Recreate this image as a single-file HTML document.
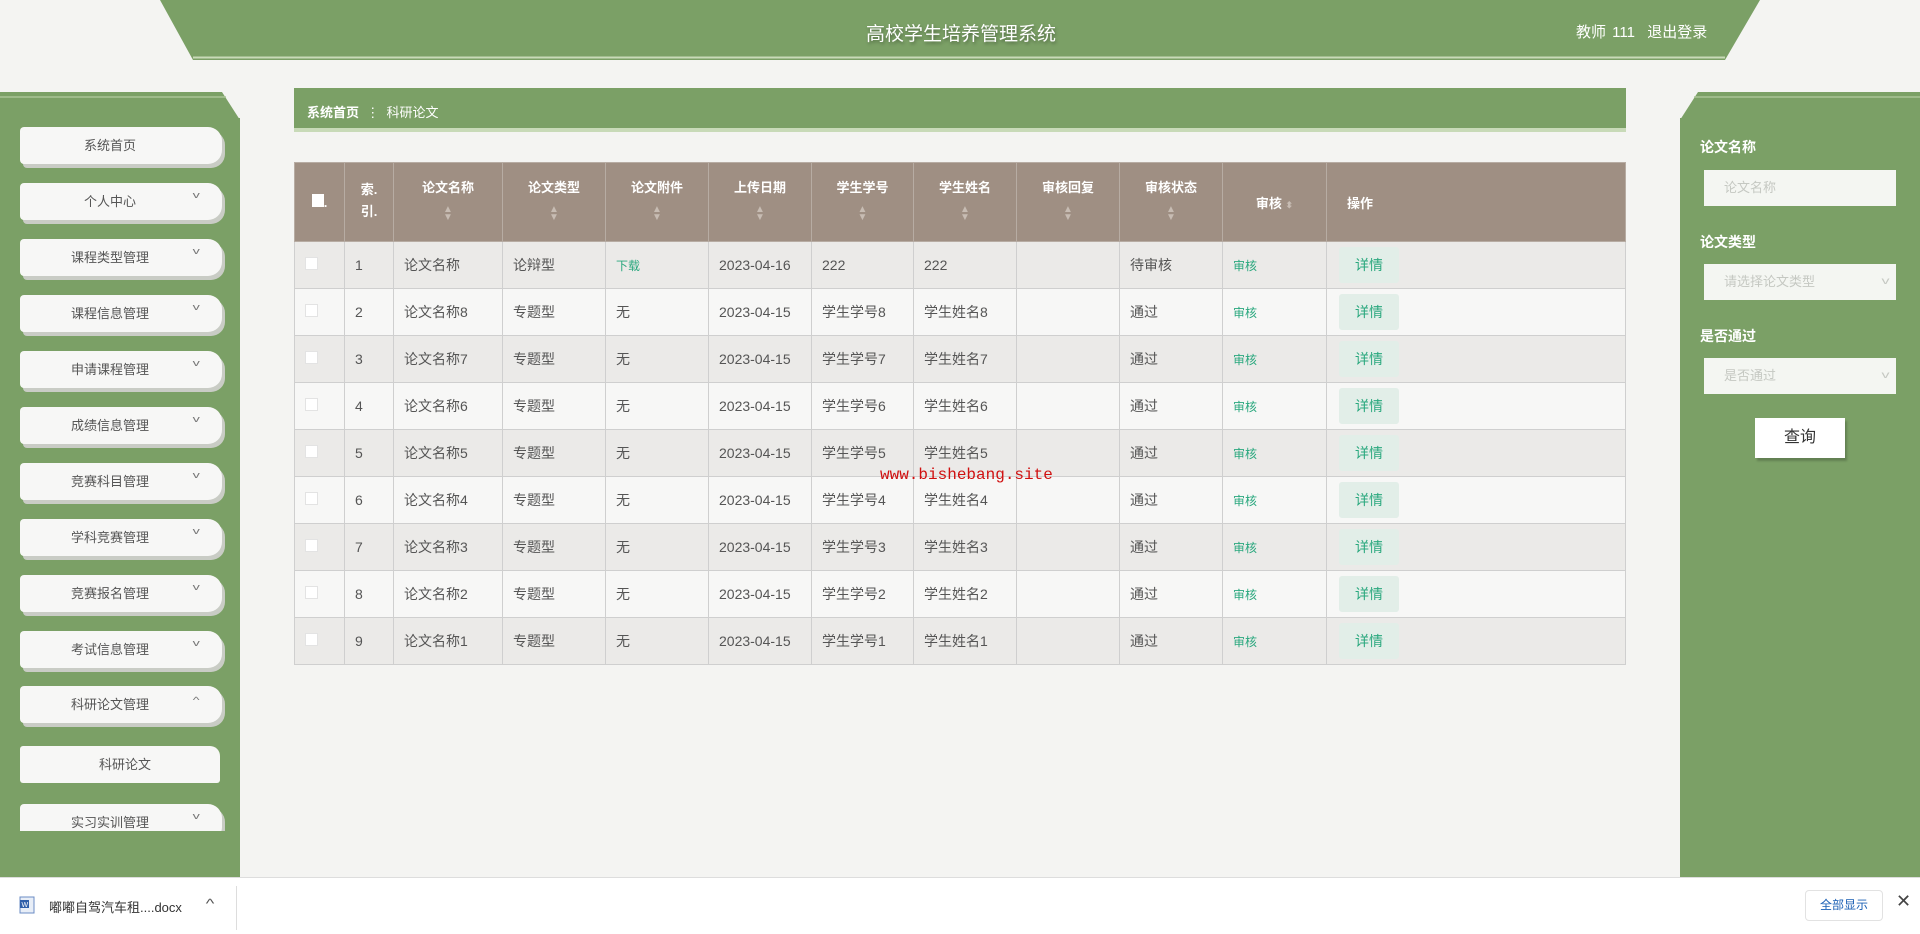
<!DOCTYPE html>
<html><head><meta charset="utf-8"><style>
*{margin:0;padding:0;box-sizing:border-box}
body{width:1920px;height:934px;overflow:hidden;background:#f4f4f2;font-family:"Liberation Sans","Noto Sans CJK SC",sans-serif;position:relative;color:#555}
.abs{position:absolute}
.title{left:0;width:1920px;top:19px;text-align:center;color:#fff;font-size:19px;text-shadow:1px 2px 3px rgba(0,0,0,.35);padding-left:2px}
.user{left:1576px;top:21px;color:#fff;font-size:15px;word-spacing:2px}
.side{left:0;width:240px;background:#7ba066}
.mi{position:absolute;left:20px;width:202px;height:37px;background:#f7f7f6;border-radius:4px 14px 14px 4px;box-shadow:3px 4px 0 #c9ccc5;font-size:13px;color:#555;text-align:center;line-height:37px;padding-right:22px}
.mi .ar{position:absolute;right:24px;top:-6px;font-size:9px;color:#777;transform:scaleX(1.6)}
.bc{left:294px;top:88px;width:1332px;height:44px;background:#7ba066;border-bottom:4px solid #c8dab8}
.bc span{position:absolute;left:13px;top:14px;color:#fff;font-size:13px}
table{position:absolute;left:294px;top:162px;width:1332px;border-collapse:collapse;font-size:14px}
th{background:#9f8f83;color:#fff;font-size:13px;font-weight:bold;height:79px;border:1px solid #b7aca3;vertical-align:top;padding-top:14px;text-align:center}
th .s{display:block;margin-top:10px;color:#c7bcb3;font-size:10px;line-height:8px}
td{height:47px;border:1px solid #cfcfcf;padding-left:10px;color:#555}
tr:nth-child(odd) td{background:#f7f7f6}
tr:nth-child(even) td{background:#ebeae8}
.g{color:#2aa87e;font-size:12px}
.cb{display:inline-block;width:13px;height:13px;background:#fff;border:1px solid #e3e3e3}
.dt{display:inline-block;width:60px;height:36px;line-height:36px;text-align:center;background:#e2eee8;color:#2aa87e;border-radius:3px;margin-left:2px}
.rp{left:1680px;width:240px;background:#7ba066}
.lb{position:absolute;left:20px;color:#fff;font-size:14px;font-weight:bold}
.in{position:absolute;left:24px;width:192px;height:36px;background:#f4f6f2;color:#c5c8c2;font-size:13px;line-height:36px;padding-left:20px}
.in i{position:absolute;right:8px;top:0;font-style:normal;font-size:10px;transform:scaleX(1.6)}
.btn{position:absolute;left:75px;width:90px;height:40px;background:#fff;text-align:center;line-height:40px;color:#333;font-size:16px;box-shadow:2px 3px 2px rgba(0,0,0,.2)}
.wm{left:880px;top:466px;color:#d01010;font-family:"Liberation Mono",monospace;font-size:16px}
.dl{left:0;top:877px;width:1920px;height:57px;background:#fff;border-top:1px solid #ddd}
</style></head><body>
<svg class="abs" style="left:0;top:0" width="1920" height="140">
<polygon points="160,0 1760,0 1725,60 193,60" fill="#7ba066"/>
<line x1="193" y1="57.5" x2="1725" y2="57.5" stroke="#c8dab8" stroke-width="2"/>
<polygon points="0,92 222,92 240,120 0,120" fill="#7ba066"/>
<line x1="0" y1="97" x2="226" y2="97" stroke="#a9c496" stroke-width="1.5"/>
<polygon points="1698,92 1920,92 1920,120 1680,140 1680,120" fill="#7ba066"/>
<line x1="1694" y1="97" x2="1920" y2="97" stroke="#a9c496" stroke-width="1.5"/>
</svg>
<div class="abs title">高校学生培养管理系统</div>
<div class="abs user">教师 111 &nbsp;退出登录</div>
<div class="abs side" style="top:118px;height:759px;overflow:hidden">
<div style="position:absolute;left:0;top:-18px;width:240px;height:731px;overflow:hidden">
<div class="mi" style="top:27px">系统首页</div>
<div class="mi" style="top:83px">个人中心<span class="ar">v</span></div>
<div class="mi" style="top:139px">课程类型管理<span class="ar">v</span></div>
<div class="mi" style="top:195px">课程信息管理<span class="ar">v</span></div>
<div class="mi" style="top:251px">申请课程管理<span class="ar">v</span></div>
<div class="mi" style="top:307px">成绩信息管理<span class="ar">v</span></div>
<div class="mi" style="top:363px">竞赛科目管理<span class="ar">v</span></div>
<div class="mi" style="top:419px">学科竞赛管理<span class="ar">v</span></div>
<div class="mi" style="top:475px">竞赛报名管理<span class="ar">v</span></div>
<div class="mi" style="top:531px">考试信息管理<span class="ar">v</span></div>
<div class="mi" style="top:586px">科研论文管理<span class="ar" style="top:-4px">^</span></div>
<div class="mi" style="top:646px;width:200px;box-shadow:none;padding-right:0;padding-left:10px;border-radius:3px 10px 3px 3px">科研论文</div>
<div class="mi" style="top:704px">实习实训管理<span class="ar">v</span></div>
</div></div>
<div class="abs bc"><span><b>系统首页</b> &nbsp;⋮ &nbsp;科研论文</span></div>
<table>
<colgroup><col style="width:50px"><col style="width:49px"><col style="width:109px"><col style="width:103px"><col style="width:103px"><col style="width:103px"><col style="width:102px"><col style="width:103px"><col style="width:103px"><col style="width:103px"><col style="width:104px"><col></colgroup>
<tr><th style="vertical-align:middle;padding-top:0"><span style="display:inline-block;width:12px;height:13px;background:#fff"></span>.</th><th style="line-height:22px;padding-top:16px">索.<br>引.</th><th>论文名称<span class="s">▲<br>▼</span></th><th>论文类型<span class="s">▲<br>▼</span></th><th>论文附件<span class="s">▲<br>▼</span></th><th>上传日期<span class="s">▲<br>▼</span></th><th>学生学号<span class="s">▲<br>▼</span></th><th>学生姓名<span class="s">▲<br>▼</span></th><th>审核回复<span class="s">▲<br>▼</span></th><th>审核状态<span class="s">▲<br>▼</span></th><th style="vertical-align:middle;padding-top:0">审核 <span style="color:#c7bcb3;font-size:9px">⬍</span></th><th style="vertical-align:middle;padding-top:0;text-align:left;padding-left:20px">操作</th></tr>
<tr><td><span class="cb"></span></td><td>1</td><td>论文名称</td><td>论辩型</td><td class="g">下载</td><td>2023-04-16</td><td>222</td><td>222</td><td></td><td>待审核</td><td class="g">审核</td><td><span class="dt">详情</span></td></tr>
<tr><td><span class="cb"></span></td><td>2</td><td>论文名称8</td><td>专题型</td><td>无</td><td>2023-04-15</td><td>学生学号8</td><td>学生姓名8</td><td></td><td>通过</td><td class="g">审核</td><td><span class="dt">详情</span></td></tr>
<tr><td><span class="cb"></span></td><td>3</td><td>论文名称7</td><td>专题型</td><td>无</td><td>2023-04-15</td><td>学生学号7</td><td>学生姓名7</td><td></td><td>通过</td><td class="g">审核</td><td><span class="dt">详情</span></td></tr>
<tr><td><span class="cb"></span></td><td>4</td><td>论文名称6</td><td>专题型</td><td>无</td><td>2023-04-15</td><td>学生学号6</td><td>学生姓名6</td><td></td><td>通过</td><td class="g">审核</td><td><span class="dt">详情</span></td></tr>
<tr><td><span class="cb"></span></td><td>5</td><td>论文名称5</td><td>专题型</td><td>无</td><td>2023-04-15</td><td>学生学号5</td><td>学生姓名5</td><td></td><td>通过</td><td class="g">审核</td><td><span class="dt">详情</span></td></tr>
<tr><td><span class="cb"></span></td><td>6</td><td>论文名称4</td><td>专题型</td><td>无</td><td>2023-04-15</td><td>学生学号4</td><td>学生姓名4</td><td></td><td>通过</td><td class="g">审核</td><td><span class="dt">详情</span></td></tr>
<tr><td><span class="cb"></span></td><td>7</td><td>论文名称3</td><td>专题型</td><td>无</td><td>2023-04-15</td><td>学生学号3</td><td>学生姓名3</td><td></td><td>通过</td><td class="g">审核</td><td><span class="dt">详情</span></td></tr>
<tr><td><span class="cb"></span></td><td>8</td><td>论文名称2</td><td>专题型</td><td>无</td><td>2023-04-15</td><td>学生学号2</td><td>学生姓名2</td><td></td><td>通过</td><td class="g">审核</td><td><span class="dt">详情</span></td></tr>
<tr><td><span class="cb"></span></td><td>9</td><td>论文名称1</td><td>专题型</td><td>无</td><td>2023-04-15</td><td>学生学号1</td><td>学生姓名1</td><td></td><td>通过</td><td class="g">审核</td><td><span class="dt">详情</span></td></tr>
</table>
<div class="abs rp" style="top:118px;height:759px">
<div class="lb" style="top:19px">论文名称</div>
<div class="in" style="top:52px">论文名称</div>
<div class="lb" style="top:114px">论文类型</div>
<div class="in" style="top:146px">请选择论文类型<i>v</i></div>
<div class="lb" style="top:208px">是否通过</div>
<div class="in" style="top:240px">是否通过<i>v</i></div>
<div class="btn" style="top:300px">查询</div>
</div>
<div class="abs wm">www.bishebang.site</div>
<div class="abs dl">
<svg class="abs" style="left:19px;top:18px" width="16" height="18"><rect x="1" y="1" width="14" height="16" fill="#e8eef7" stroke="#6b8cc4"/><rect x="1" y="4" width="9" height="8" fill="#2f5faa"/><text x="2.5" y="11" font-size="7" fill="#fff" font-family="Liberation Sans">W</text></svg>
<div class="abs" style="left:49px;top:19px;font-size:13px;color:#333">嘟嘟自驾汽车租....docx</div>
<div class="abs" style="left:207px;top:18px;font-size:13px;color:#555;transform:scaleX(1.4)">^</div>
<div class="abs" style="left:236px;top:8px;width:1px;height:44px;background:#ddd"></div>
<div class="abs" style="left:1805px;top:12px;width:78px;height:31px;border:1px solid #e2e2e2;border-radius:4px;font-size:12px;color:#1a5fb4;text-align:center;line-height:29px">全部显示</div>
<div class="abs" style="left:1896px;top:13px;font-size:18px;color:#444">✕</div>
</div>
</body></html>
